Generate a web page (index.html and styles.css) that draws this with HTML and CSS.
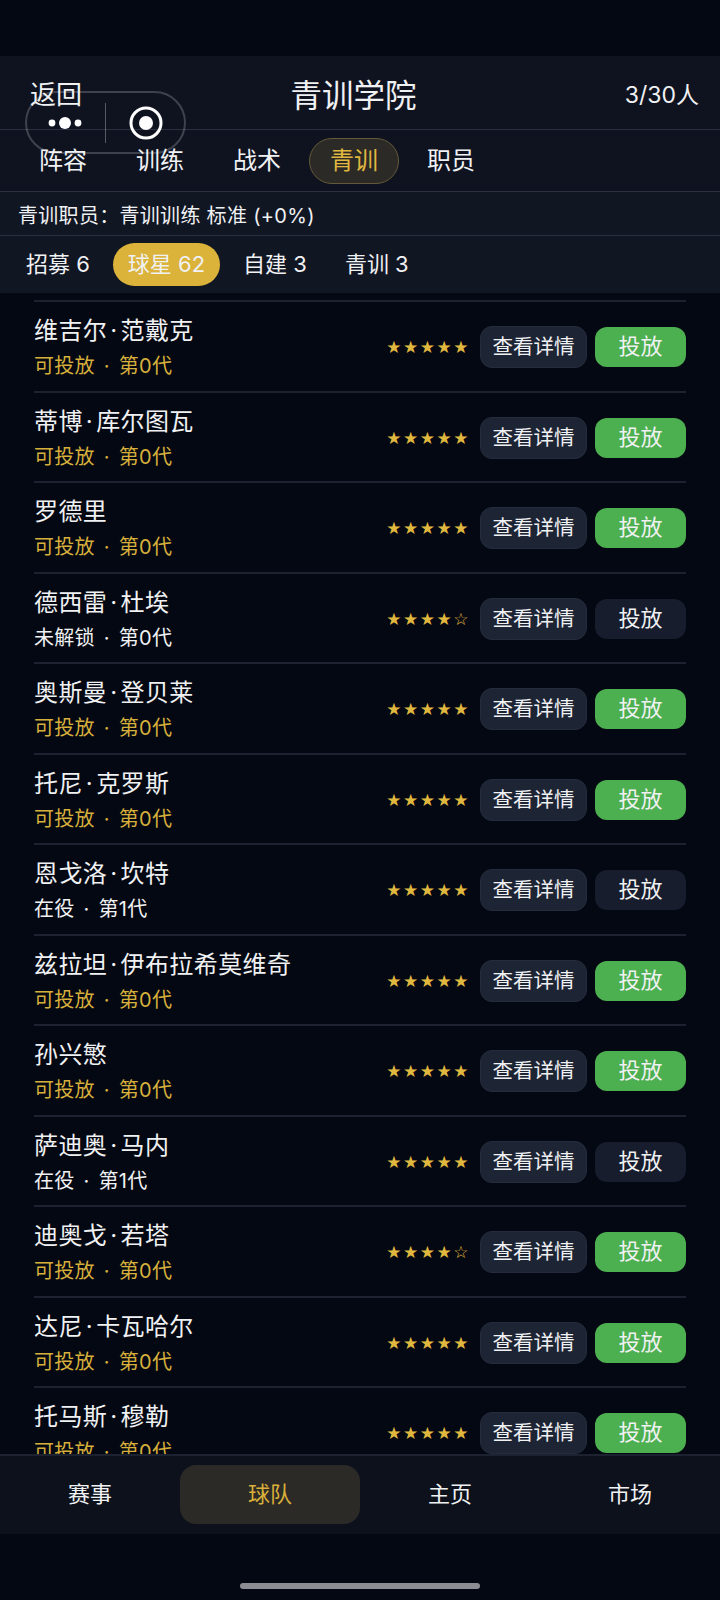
FILE: index.html
```html
<!DOCTYPE html>
<html>
  <head>
    <meta charset="utf-8" />
    <link rel="stylesheet" href="styles.css">
    <title>青训学院</title>
  </head>
  <body>
    <div class="page">
      <div class="statusGap"></div>
      <div class="header">
        <span class="back">返回</span>
        <span class="title">青训学院</span>
        <span class="count">3/30人</span>
      </div>
      <div class="tabs">
        <span class="tab">阵容</span>
        <span class="tab">训练</span>
        <span class="tab">战术</span>
        <span class="tab active">青训</span>
        <span class="tab">职员</span>
      </div>
      <div class="info">青训职员：青训训练 标准 (+0%)</div>
      <div class="filters">
        <span class="filter">招募 6</span>
        <span class="filter active">球星 62</span>
        <span class="filter">自建 3</span>
        <span class="filter">青训 3</span>
      </div>
      <div class="list">
        <div class="row">
          <div class="who"><div class="name">维吉尔<i class="dot">·</i>范戴克</div><div class="sub gold">可投放 · 第0代</div></div>
          <div class="stars">★★★★★</div><span class="btn detail">查看详情</span><span class="btn drop on">投放</span>
        </div>
        <div class="row">
          <div class="who"><div class="name">蒂博<i class="dot">·</i>库尔图瓦</div><div class="sub gold">可投放 · 第0代</div></div>
          <div class="stars">★★★★★</div><span class="btn detail">查看详情</span><span class="btn drop on">投放</span>
        </div>
        <div class="row">
          <div class="who"><div class="name">罗德里</div><div class="sub gold">可投放 · 第0代</div></div>
          <div class="stars">★★★★★</div><span class="btn detail">查看详情</span><span class="btn drop on">投放</span>
        </div>
        <div class="row">
          <div class="who"><div class="name">德西雷<i class="dot">·</i>杜埃</div><div class="sub">未解锁 · 第0代</div></div>
          <div class="stars">★★★★☆</div><span class="btn detail">查看详情</span><span class="btn drop">投放</span>
        </div>
        <div class="row">
          <div class="who"><div class="name">奥斯曼<i class="dot">·</i>登贝莱</div><div class="sub gold">可投放 · 第0代</div></div>
          <div class="stars">★★★★★</div><span class="btn detail">查看详情</span><span class="btn drop on">投放</span>
        </div>
        <div class="row">
          <div class="who"><div class="name">托尼<i class="dot">·</i>克罗斯</div><div class="sub gold">可投放 · 第0代</div></div>
          <div class="stars">★★★★★</div><span class="btn detail">查看详情</span><span class="btn drop on">投放</span>
        </div>
        <div class="row">
          <div class="who"><div class="name">恩戈洛<i class="dot">·</i>坎特</div><div class="sub">在役 · 第1代</div></div>
          <div class="stars">★★★★★</div><span class="btn detail">查看详情</span><span class="btn drop">投放</span>
        </div>
        <div class="row">
          <div class="who"><div class="name">兹拉坦<i class="dot">·</i>伊布拉希莫维奇</div><div class="sub gold">可投放 · 第0代</div></div>
          <div class="stars">★★★★★</div><span class="btn detail">查看详情</span><span class="btn drop on">投放</span>
        </div>
        <div class="row">
          <div class="who"><div class="name">孙兴慜</div><div class="sub gold">可投放 · 第0代</div></div>
          <div class="stars">★★★★★</div><span class="btn detail">查看详情</span><span class="btn drop on">投放</span>
        </div>
        <div class="row">
          <div class="who"><div class="name">萨迪奥<i class="dot">·</i>马内</div><div class="sub">在役 · 第1代</div></div>
          <div class="stars">★★★★★</div><span class="btn detail">查看详情</span><span class="btn drop">投放</span>
        </div>
        <div class="row">
          <div class="who"><div class="name">迪奥戈<i class="dot">·</i>若塔</div><div class="sub gold">可投放 · 第0代</div></div>
          <div class="stars">★★★★☆</div><span class="btn detail">查看详情</span><span class="btn drop on">投放</span>
        </div>
        <div class="row">
          <div class="who"><div class="name">达尼<i class="dot">·</i>卡瓦哈尔</div><div class="sub gold">可投放 · 第0代</div></div>
          <div class="stars">★★★★★</div><span class="btn detail">查看详情</span><span class="btn drop on">投放</span>
        </div>
        <div class="row">
          <div class="who"><div class="name">托马斯<i class="dot">·</i>穆勒</div><div class="sub gold">可投放 · 第0代</div></div>
          <div class="stars">★★★★★</div><span class="btn detail">查看详情</span><span class="btn drop on">投放</span>
        </div>
      </div>
      <div class="nav">
        <span class="navItem">赛事</span>
        <span class="navItem active">球队</span>
        <span class="navItem">主页</span>
        <span class="navItem">市场</span>
      </div>
      <div class="homeArea"><div class="homeBar"></div></div>

      <div class="capsule">
        <svg class="more" width="36" height="14" viewBox="0 0 36 14">
          <circle cx="5" cy="7" r="3.4" fill="#fff" />
          <circle cx="18" cy="7" r="6" fill="#fff" />
          <circle cx="31" cy="7" r="3.4" fill="#fff" />
        </svg>
        <span class="capsuleLine"></span>
        <svg class="target" width="34" height="34" viewBox="0 0 34 34">
          <circle cx="17" cy="17" r="15" fill="none" stroke="#fff" stroke-width="3" />
          <circle cx="17" cy="17" r="7" fill="#fff" />
        </svg>
      </div>
    </div>
  </body>
</html>
```

FILE: styles.css
```css
* {
  box-sizing: border-box;
}

body {
  margin: 0;
  background: #040812;
  font-family: "Inter", "Noto Sans CJK SC", sans-serif;
  color: #f0f1f3;
}

.page {
  position: relative;
  width: 720px;
  height: 1600px;
  display: flex;
  flex-direction: column;
  overflow: hidden;
}

.statusGap {
  height: 56px;
  flex: none;
}

.header {
  height: 74px;
  flex: none;
  padding: 0 21px 0 30px;
  display: flex;
  align-items: center;
  justify-content: space-between;
  background: #0f1320;
  border-bottom: 1px solid #2a3040;
}

.back {
  font-size: 26px;
  width: 120px;
}

.title {
  font-size: 31.5px;
}

.count {
  font-size: 23px;
  width: 142px;
  text-align: right;
}

.tabs {
  height: 62px;
  flex: none;
  padding: 0 18px;
  display: flex;
  align-items: center;
  gap: 7px;
  background: #0f1320;
  border-bottom: 1px solid #2a3040;
}

.tab {
  width: 90px;
  height: 46px;
  line-height: 44px;
  font-size: 24px;
  text-align: center;
  border: 1px solid transparent;
  border-radius: 23px;
}

.tab.active {
  color: #e0b83f;
  background: #2c2a26;
  border-color: #645a39;
}

.info {
  height: 44px;
  flex: none;
  padding: 2px 0 0 18px;
  line-height: 44px;
  font-size: 20px;
  letter-spacing: 0.3px;
  background: #111623;
  border-bottom: 1px solid #2a3040;
}

.filters {
  height: 57px;
  flex: none;
  padding: 0 11px;
  display: flex;
  align-items: center;
  gap: 8px;
  background: #111623;
}

.filter {
  height: 43px;
  line-height: 42px;
  padding: 0 15px;
  font-size: 22px;
  border-radius: 22px;
}

.filter.active {
  background: #dbb23a;
}

.list {
  flex: 1;
  min-height: 0;
  overflow: hidden;
  padding: 7px 34px 0;
}

.row {
  height: 90.5px;
  flex: none;
  padding-top: 2px;
  display: flex;
  align-items: center;
  border-top: 2px solid #1d2231;
}

.who {
  flex: 1;
  min-width: 0;
  padding-top: 3px;
}

.name {
  font-size: 24px;
  line-height: 36px;
  letter-spacing: 0.4px;
}

.dot {
  font-style: normal;
  margin: 0 3px;
}

.sub {
  font-size: 20px;
  line-height: 35px;
  letter-spacing: 0.3px;
  word-spacing: 3px;
}

.gold {
  color: #d7b03c;
}

.stars {
  font-family: "DejaVu Sans", sans-serif;
  font-size: 17px;
  letter-spacing: 1.5px;
  color: #e0b83f;
  margin-right: 10px;
}

.btn {
  height: 40px;
  line-height: 38px;
  text-align: center;
  border-radius: 12px;
}

.detail {
  width: 107px;
  height: 42px;
  line-height: 40px;
  font-size: 20.5px;
  background: #1d2434;
  border: 1px solid #252c3d;
}

.drop {
  width: 91px;
  margin-left: 8px;
  font-size: 22px;
  background: #171d2d;
}

.drop.on {
  background: #4caf50;
}

.nav {
  height: 80px;
  flex: none;
  padding-bottom: 2px;
  display: grid;
  grid-template-columns: repeat(4, 1fr);
  align-items: center;
  background: #0d111c;
  border-top: 2px solid #1d2231;
}

.navItem {
  height: 59px;
  line-height: 58px;
  text-align: center;
  font-size: 22px;
  border-radius: 16px;
}

.navItem.active {
  color: #d9b03a;
  background: #2c2a26;
}

.homeArea {
  height: 66px;
  flex: none;
  display: flex;
  justify-content: center;
  padding-top: 49px;
}

.homeBar {
  width: 240px;
  height: 6px;
  border-radius: 3px;
  background: #8b8d92;
}

.capsule {
  position: absolute;
  left: 25px;
  top: 91px;
  width: 161px;
  height: 63px;
  display: flex;
  align-items: center;
  border: 2px solid rgba(255, 255, 255, 0.2);
  border-radius: 32px;
}

.more {
  margin-left: 20px;
}

.capsuleLine {
  width: 1px;
  height: 40px;
  margin-left: 22px;
  background: rgba(255, 255, 255, 0.3);
}

.target {
  margin-left: 23px;
}
```
